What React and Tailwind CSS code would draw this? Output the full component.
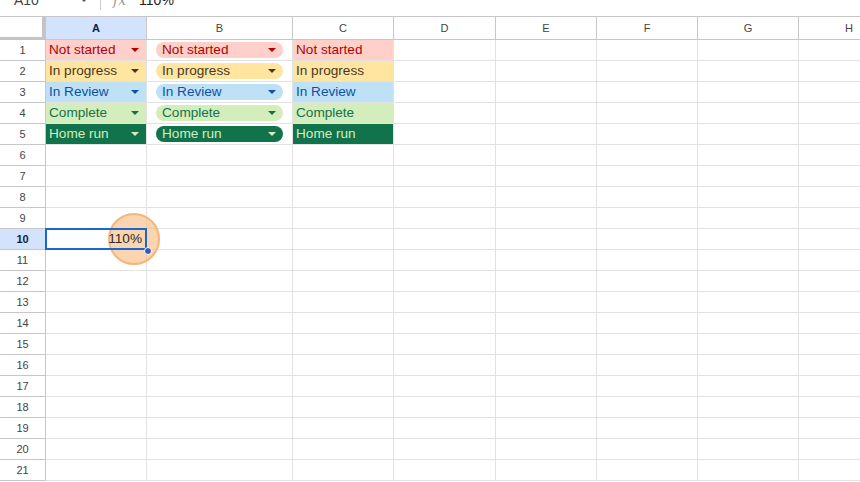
import React from 'react'

const cols = [
  { key: 'A', w: 'w-[101px]' },
  { key: 'B', w: 'w-[146px]' },
  { key: 'C', w: 'w-[101px]' },
  { key: 'D', w: 'w-[102px]' },
  { key: 'E', w: 'w-[101px]' },
  { key: 'F', w: 'w-[101px]' },
  { key: 'G', w: 'w-[101px]' },
  { key: 'H', w: 'w-[101px]' },
]

const statuses = [
  { label: 'Not started', bg: 'bg-[#ffcfc9]', fg: 'text-[#b10202]', arrow: 'border-t-[#b10202]' },
  { label: 'In progress', bg: 'bg-[#ffe5a0]', fg: 'text-[#473821]', arrow: 'border-t-[#473821]' },
  { label: 'In Review', bg: 'bg-[#bfe1f6]', fg: 'text-[#0a53a8]', arrow: 'border-t-[#0a53a8]' },
  { label: 'Complete', bg: 'bg-[#d4edbc]', fg: 'text-[#11734b]', arrow: 'border-t-[#11734b]' },
  { label: 'Home run', bg: 'bg-[#11734b]', fg: 'text-[#d4edbc]', arrow: 'border-t-[#d4edbc]' },
]

const Arrow = ({ cls }) => (
  <span className={`w-0 h-0 border-l-[4px] border-r-[4px] border-t-[4px] border-l-transparent border-r-transparent ${cls}`}></span>
)

const Cell = ({ col, row }) => {
  const s = statuses[row - 1]
  let inner = null
  if (s && col === 'A') {
    inner = (
      <div className={`flex items-center justify-between h-full pl-[3px] pr-[7px] ${s.bg} ${s.fg}`}>
        <span>{s.label}</span>
        <Arrow cls={s.arrow} />
      </div>
    )
  } else if (s && col === 'B') {
    inner = (
      <div className="flex items-center h-full px-[9px]">
        <div className={`flex items-center justify-between w-full h-[16px] rounded-full pl-[6px] pr-[7px] ${s.bg} ${s.fg}`}>
          <span>{s.label}</span>
          <Arrow cls={s.arrow} />
        </div>
      </div>
    )
  } else if (s && col === 'C') {
    inner = (
      <div className={`flex items-center h-full pl-[3px] ${s.bg} ${s.fg}`}>
        <span>{s.label}</span>
      </div>
    )
  } else if (row === 10 && col === 'A') {
    inner = (
      <div className="relative h-full">
        <div className="absolute left-[62px] top-[-16px] w-[52px] h-[52px] rounded-full bg-[#f9b97b]/60 border-2 border-[#f7b57a]"></div>
        <div className="absolute inset-[-1px] border-2 border-[#1a67d2] flex items-center justify-end pr-[3px] text-[#2a2a2a]">
          110%
        </div>
        <div className="absolute right-[-6px] bottom-[-6px] w-[8px] h-[8px] rounded-full bg-[#3c5aa8] border border-white"></div>
      </div>
    )
  }
  const colDef = cols.find(c => c.key === col)
  return (
    <div className={`${colDef.w} shrink-0 h-[21px] border-r border-b border-[#e2e2e2] text-[13.6px] leading-none`}>
      {inner}
    </div>
  )
}

export default function App() {
  const rows = Array.from({ length: 21 }, (_, i) => i + 1)
  return (
    <div className="w-[860px] h-[482px] overflow-hidden bg-white font-['Liberation_Sans',Arial,sans-serif]">
      <div className="h-[17px] border-b border-[#c7c7c7] overflow-hidden relative">
        <div className="flex items-center h-[20px] mt-[-10px] text-[14px] text-[#444]">
          <span className="ml-[14px] w-[66px]">A10</span>
          <Arrow cls="border-t-[#555]" />
          <span className="ml-[12px] w-px h-[20px] bg-[#ccc]"></span>
          <span className="ml-[12px] italic text-[#999] font-['DejaVu_Serif',serif]">fx</span>
          <span className="ml-[13px] text-[#222]">110%</span>
        </div>
      </div>
      <div className="flex h-[23px]">
        <div className="w-[46px] shrink-0 flex">
          <div className="flex-1 border-b-[3px] border-[#c4c4c4] bg-white"></div>
          <div className="w-[4px] bg-[#c4c4c4]"></div>
        </div>
        {cols.map(c => (
          <div
            key={c.key}
            className={`${c.w} shrink-0 flex items-center justify-center border-r border-b border-[#c7c7c7] text-[11px] ${c.key === 'A' ? 'bg-[#d3e3fd] text-[#0b1f44] font-bold' : 'text-[#444]'}`}
          >
            {c.key}
          </div>
        ))}
      </div>
      {rows.map(r => (
        <div key={r} className="flex">
          <div className={`w-[46px] shrink-0 h-[21px] flex items-center justify-center border-r border-b border-[#c7c7c7] text-[11px] ${r === 10 ? 'bg-[#d3e3fd] text-[#0b1f44] font-bold' : 'text-[#444]'}`}>
            {r}
          </div>
          {cols.map(c => (
            <Cell key={c.key} col={c.key} row={r} />
          ))}
        </div>
      ))}
    </div>
  )
}
